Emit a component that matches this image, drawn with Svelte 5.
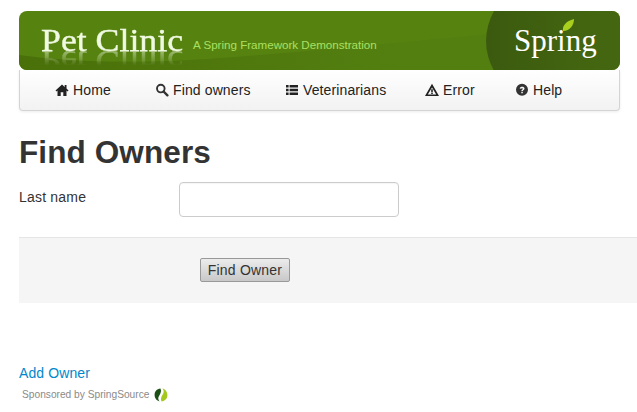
<script>
  const links = [
    { label: 'Home', icon: 'home' },
    { label: 'Find owners', icon: 'search' },
    { label: 'Veterinarians', icon: 'list' },
    { label: 'Error', icon: 'warning' },
    { label: 'Help', icon: 'help' }
  ];
</script>

<div class="page">
  <header class="banner">
    <svg class="wave" width="601" height="59" viewBox="0 0 601 59">
      <defs>
        <linearGradient id="waveFill" x1="0" x2="1" y1="0" y2="0">
          <stop offset="0" stop-color="#497009" />
          <stop offset="0.45" stop-color="#4f780d" />
          <stop offset="0.8" stop-color="#537f10" />
        </linearGradient>
      </defs>
      <path d="M0 44C50 51 110 52 170 49S350 34 480 22V59H0Z" fill="url(#waveFill)" />
    </svg>
    <div class="badge"></div>
    <span class="title">Pet Clinic</span>
    <span class="tagline">A Spring Framework Demonstration</span>
    <span class="spring">Spring</span>
    <svg class="leaf" width="13" height="14" viewBox="0 0 13 14">
      <path d="M1 13C0 8 4 3 12 1 12 7 8 13 1 13Z" fill="#a8d01c" />
    </svg>
  </header>

  <nav class="navbar">
    {#each links as link}
      <a class="nav-link" href="#top">
        <svg class="icon" width="14" height="14" viewBox="0 0 14 14">
          {#if link.icon === 'home'}
            <path d="M7 1.5 0.5 7.5 1.5 8.5 2.5 7.6V13H5.7V9.2H8.3V13H11.5V7.6L12.5 8.5 13.5 7.5 11.5 5.6V2H9.7V4L7 1.5Z" fill="#222" />
          {:else if link.icon === 'search'}
            <circle cx="5.8" cy="5.6" r="3.8" fill="none" stroke="#333" stroke-width="1.9" />
            <path d="M8.6 8.5 12.4 12.3" stroke="#333" stroke-width="2.4" stroke-linecap="round" />
          {:else if link.icon === 'list'}
            <path d="M1 2H3.6V4.6H1ZM4.6 2H13V4.6H4.6ZM1 5.7H3.6V8.3H1ZM4.6 5.7H13V8.3H4.6ZM1 9.4H3.6V12H1ZM4.6 9.4H13V12H4.6Z" fill="#222" />
          {:else if link.icon === 'warning'}
            <path fill-rule="evenodd" d="M7 0.8 14 13H0L7 0.8ZM7 4.4 2.8 11.5H11.2L7 4.4ZM6.2 6.2H7.8V9.2H6.2ZM6.2 9.8H7.8V11H6.2Z" fill="#222" />
          {:else}
            <path fill-rule="evenodd" d="M7 0.8A6 6 0 1 1 7 12.8 6 6 0 1 1 7 0.8ZM4.7 5.4 6 5.8C6.1 5 7.9 4.9 7.9 5.7 7.9 6.4 6.3 6.6 6.3 8.2H7.8C7.8 7.2 9.5 7 9.5 5.5 9.5 3.4 5.1 3.3 4.7 5.4ZM6.3 8.9V10.3H7.8V8.9Z" fill="#333" />
          {/if}
        </svg>
        {link.label}
      </a>
    {/each}
  </nav>

  <h1>Find Owners</h1>

  <form class="search-form" onsubmit={(e) => e.preventDefault()}>
    <div class="field">
      <label for="lastName">Last name</label>
      <input id="lastName" type="text" />
    </div>
    <div class="form-actions">
      <button type="submit">Find Owner</button>
    </div>
  </form>

  <a class="add-owner" href="#top">Add Owner</a>

  <div class="sponsor">
    <span>Sponsored by SpringSource</span>
    <svg width="14" height="14" viewBox="0 0 14 14">
      <path d="M6.4 0.6C2.8 1 0.6 3.6 0.6 7 0.6 10.2 2.8 12.8 5.6 13.4 3.4 10.8 4.4 9 5.6 7 6.8 5 7.6 3 6.4 0.6Z" fill="#1c4f14" />
      <path d="M7.6 13.4C11.2 13 13.4 10.4 13.4 7 13.4 3.8 11.2 1.2 8.4 0.6 10.6 3.2 9.6 5 8.4 7 7.2 9 6.4 11 7.6 13.4Z" fill="#a4c81e" />
    </svg>
  </div>
</div>

<style>
  :global(body) {
    margin: 0;
    background: #fff;
    font-family: "Liberation Sans", Arial, sans-serif;
    color: #333;
  }

  .page {
    height: 412px;
    overflow: hidden;
    padding: 11px 0 0 19px;
    box-sizing: border-box;
  }

  .banner {
    position: relative;
    display: flex;
    align-items: flex-start;
    width: 601px;
    height: 59px;
    overflow: hidden;
    border-radius: 8px;
    background: #568310;
  }

  .wave {
    position: absolute;
    left: 0;
    top: 0;
  }

  .badge {
    position: absolute;
    left: 467px;
    top: -50px;
    width: 220px;
    height: 160px;
    border-radius: 50%;
    background: linear-gradient(90deg, #3b5a0f, #446610 50%);
  }

  .title {
    position: relative;
    margin: 11px 0 0 22px;
    font-family: "Liberation Serif", serif;
    font-size: 32.5px;
    line-height: 36px;
    color: #f0f9e2;
    -webkit-text-stroke: 0.4px #f0f9e2;
    transform: scaleX(1.1);
    transform-origin: left center;
    -webkit-box-reflect: below -14px linear-gradient(transparent 40%, rgba(255, 255, 255, 0.7));
  }

  .tagline {
    position: relative;
    margin: 27px 0 0 23px;
    font-size: 11.6px;
    line-height: 13px;
    color: #a9e060;
  }

  .spring {
    position: absolute;
    left: 495px;
    top: 10px;
    font-family: "Liberation Serif", serif;
    font-size: 31px;
    line-height: 40px;
    color: #fff;
  }

  .leaf {
    position: absolute;
    left: 543px;
    top: 7px;
  }

  .navbar {
    display: grid;
    grid-template-columns: 100px 130px 140px 90px auto;
    width: 601px;
    height: 41px;
    box-sizing: border-box;
    padding-left: 35px;
    align-items: center;
    border: 1px solid #d4d4d4;
    border-top: 0;
    border-radius: 0 0 4px 4px;
    background: linear-gradient(#fff, #f2f2f2);
    box-shadow: 0 1px 3px rgba(0, 0, 0, 0.08);
  }

  .nav-link {
    display: flex;
    align-items: center;
    gap: 4px;
    font-size: 14px;
    letter-spacing: 0.12px;
    color: #222;
    text-decoration: none;
  }

  .icon {
    flex: none;
  }

  h1 {
    margin: 22px 0 0;
    font-size: 31.5px;
    line-height: 38px;
    font-weight: bold;
    letter-spacing: 0.1px;
    color: #333;
  }

  .field {
    display: flex;
    align-items: flex-start;
    margin-top: 11px;
  }

  label {
    width: 160px;
    padding-top: 6px;
    font-size: 14px;
    line-height: 18px;
    letter-spacing: 0.2px;
  }

  input {
    width: 220px;
    height: 35px;
    box-sizing: border-box;
    border: 1px solid #ccc;
    border-radius: 4px;
    background: #fff;
    box-shadow: inset 0 1px 1px rgba(0, 0, 0, 0.04);
  }

  .form-actions {
    margin-top: 20px;
    height: 66px;
    box-sizing: border-box;
    padding: 20px 0 0 181px;
    background: #f5f5f5;
    border-top: 1px solid #e5e5e5;
  }

  button {
    display: block;
    width: 90px;
    height: 24px;
    padding: 0;
    border: 1px solid #999;
    border-radius: 2px;
    background: linear-gradient(#ececec, #c8c8c8);
    font-family: inherit;
    font-size: 14px;
    letter-spacing: 0.2px;
    color: #333;
  }

  .add-owner {
    display: block;
    margin-top: 61px;
    font-size: 14px;
    line-height: 18px;
    letter-spacing: 0.1px;
    color: #0088cc;
    text-decoration: none;
  }

  .sponsor {
    display: flex;
    align-items: center;
    gap: 5px;
    margin: 6px 0 0 3px;
    font-size: 10.2px;
    line-height: 14px;
    color: #8a8a8a;
  }
</style>
